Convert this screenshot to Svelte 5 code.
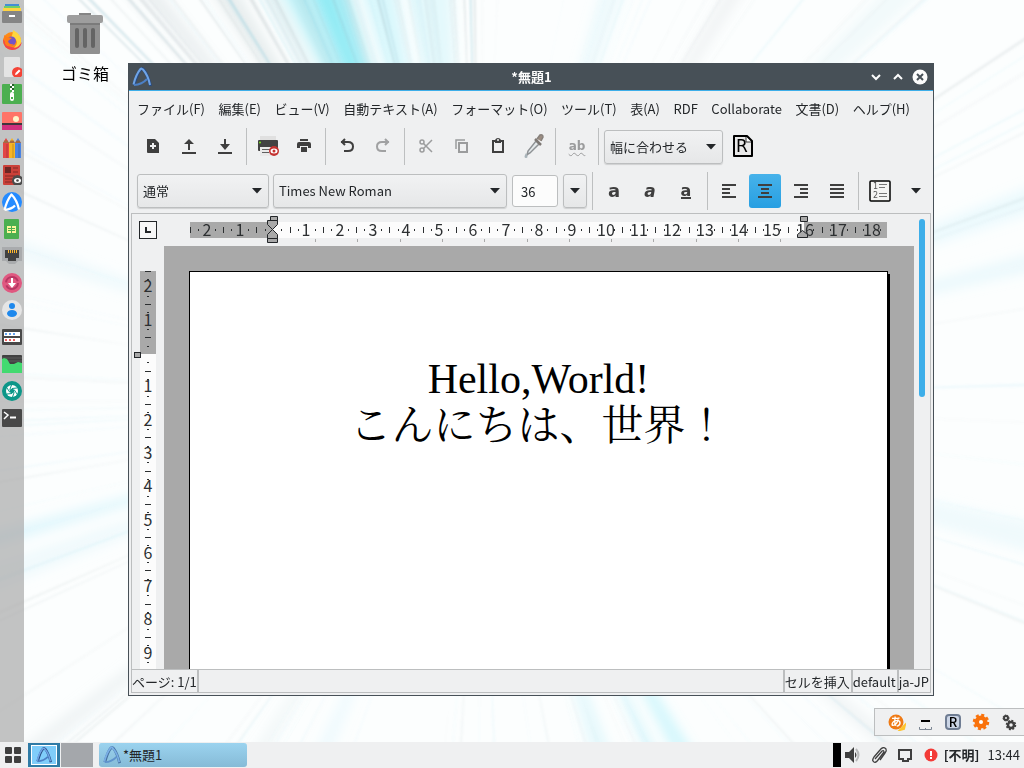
<script>
  const menus = ['ファイル(F)', '編集(E)', 'ビュー(V)', '自動テキスト(A)', 'フォーマット(O)', 'ツール(T)', '表(A)', 'RDF', 'Collaborate', '文書(D)', 'ヘルプ(H)'];
  const dock = ['files', 'firefox', 'note', 'archive', 'image', 'pencils', 'reader', 'abiword', 'sheet', 'network', 'updates', 'user', 'settings', 'monitor', 'shutter', 'terminal'];

  const marks = (from, to, cm) => {
    const list = [];
    for (let q = from; q <= to; q++) {
      const kind = q % 4 === 0 ? 'label' : q % 2 === 0 ? 'half' : 'dot';
      if (q !== 0) list.push({ at: Math.round((q * cm) / 4), kind, label: Math.abs(q / 4) });
    }
    return list;
  };
  const across = marks(-10, 73, 33.25);
  const down = marks(-10, 37, 33.3);
  const tabs = Array.from({ length: 12 }, (_, i) => 125 + Math.round(i * 42.3));

  let seed = 11;
  const rnd = () => (seed = (seed * 16807) % 2147483647) / 2147483647;
  const ray = (deg, spread, r0, r1) => {
    const cx = 480, cy = 400;
    const p = (a, r) => `${(cx + Math.cos((a * Math.PI) / 180) * r).toFixed(1)},${(cy + Math.sin((a * Math.PI) / 180) * r).toFixed(1)}`;
    return `${p(deg, r0)} ${p(deg - spread, r1)} ${p(deg + spread, r1)}`;
  };
  const fine = Array.from({ length: 190 }, (_, i) => {
    const top = i % 3 === 0;
    const a = top ? 225 + rnd() * 45 : rnd() * 360;
    return { d: ray(a, 0.04 + rnd() * 0.16, 120 + rnd() * 200, 900), c: rnd() > 0.55 ? '#8fd8ea' : '#8d9ca3', o: (top ? 0.14 : 0.03) + rnd() * 0.12 };
  });
  const broad = [
    [248, 5, '#8cecf7', 0.5], [249, 1.6, '#3fdcec', 0.4], [251.5, 0.5, '#14bccf', 0.4], [246, 0.4, '#58717a', 0.3], [242.5, 0.8, '#8fc6d2', 0.3],
    [256, 3, '#a6eefa', 0.4], [263, 4, '#c7f3fb', 0.45], [238, 1.6, '#b9c6cb', 0.3], [231, 1, '#99a9b0', 0.18],
    [288, 2, '#c8f1f9', 0.25], [302, 1, '#c2cacd', 0.2], [316, 1.5, '#cfe9f0', 0.2], [164, 1, '#a5e9f8', 0.3],
    [160, 1.6, '#d3f3fa', 0.3], [198, 1.4, '#d7f2f8', 0.3], [340, 1.4, '#bfeefa', 0.25], [346, 1, '#c6eef7', 0.3],
    [14, 1.6, '#d2f3fa', 0.3], [60, 1.6, '#7ce7f7', 0.3], [64, 0.8, '#8ce6f5', 0.35], [71, 1.8, '#bff1fa', 0.4],
    [114, 1.4, '#c7f1fa', 0.25], [122, 1, '#c9d7dc', 0.2], [142, 1, '#d5dde0', 0.3], [40, 1, '#d4dde0', 0.25]
  ].map(([a, s, c, o]) => ({ d: ray(a, s, 150, 900), c, o }));
</script>

{#snippet arrow()}
  <svg class="arrow" width="10" height="6" viewBox="0 0 10 6" aria-hidden="true"><path d="M0 0h10L5 5.5z" fill="#232629" /></svg>
{/snippet}

{#snippet abi(size)}
  <svg width={size} height={size} viewBox="0 0 20 20" aria-hidden="true">
    <path d="M2 18C4 11 6 5 9 2Q10 1 12 3C15 7 17 13 18.500 19" fill="none" stroke="#274b82" stroke-width="3" stroke-linejoin="round" />
    <path d="M1.500 17.500C3 11 6 5 8.500 2Q9.500 1 11 2.500C15 7 17 13 18 18" fill="none" stroke="#6fa4e6" stroke-width="2" />
    <path d="M2 18Q10 17.500 15 12" fill="none" stroke="#4c80c6" stroke-width="2" />
  </svg>
{/snippet}

{#snippet dockIcon(name)}
  <svg width="20" height="20" viewBox="0 0 20 20" aria-hidden="true">
    {#if name === 'files'}
      <rect x="3" y="1" width="14" height="4" fill="#438ed5" /><rect x="2" y="3" width="16" height="4" fill="#70ce68" /><rect x="1" y="5" width="18" height="4" fill="#ffd342" />
      <rect y="8" width="20" height="12" rx="1" fill="#858585" /><rect x="7" y="12" width="6" height="2" fill="#fff" />
    {:else if name === 'firefox'}
      <circle cx="10" cy="11" r="9" fill="#ff8a16" /><path d="M1 9Q1 19 10 20 18 20 20 12 13 21 6 15Z" fill="#f0444f" />
      <path d="M11 0Q20 5 19 12 18 17 12 18 19 10 9 8 11 4 11 0" fill="#ffd53d" /><circle cx="9.500" cy="11" r="4.500" fill="#7554c6" /><path d="M2 5l3 2 5 1-4 3q1 4 6 3-5 5-9 0Z" fill="#ff7d1a" />
    {:else if name === 'note'}
      <rect x="2" y="0" width="16" height="20" rx="1" fill="#e4e4e4" /><circle cx="15.500" cy="15.500" r="5.500" fill="#f44336" /><path d="M13 18l.5-2 3.500-3.500 1.500 1.500L15 17.500z" fill="#fff" />
    {:else if name === 'archive'}
      <rect width="20" height="20" rx="1" fill="#4caf50" /><path d="M8 0h2v2H8zM10 2h2v2h-2zM8 4h2v2H8zM10 6h2v2h-2z" fill="#fff" /><path d="M10 0h2v2h-2zM8 2h2v2H8zM10 4h2v2h-2z" fill="#25612a" /><rect x="8" y="8" width="4" height="9" rx="2" fill="#fff" /><rect x="9" y="13" width="2" height="2" fill="#4caf50" />
    {:else if name === 'image'}
      <rect y="1" width="20" height="18" rx="1" fill="#ff7367" /><circle cx="14" cy="8" r="3" fill="#fff3c9" /><rect y="13" width="20" height="6" fill="#d1307d" /><rect y="12" width="20" height="2" fill="#40353b" />
    {:else if name === 'pencils'}
      <path d="M1 5l3-5 3 5v15H1z" fill="#e34646" /><path d="M7 5l3-5 3 5v15H7z" fill="#f6b526" /><path d="M13 5l3-5 3 5v15h-6z" fill="#4a84e4" /><path d="M1 5l1.500-2.500h3L7 5zM7 5l1.500-2.500h3L13 5zM13 5l1.500-2.500h3L19 5z" fill="#a56a43" /><path d="M5 6v14M11 6v14M17 6v14" stroke="#0003" />
    {:else if name === 'reader'}
      <rect x="1" width="17" height="20" rx="1" fill="#cb4039" /><path d="M3 2h6v6H3z" fill="#6b2624" /><path d="M11 3h5M11 7h5M3 11h10M3 14h7M3 17h7" stroke="#7f2926" /><circle cx="15.500" cy="15.500" r="5.500" fill="#4b4b4b" /><ellipse cx="15.500" cy="15.500" rx="3.500" ry="2.500" fill="#fff" /><circle cx="15.500" cy="15.500" r="1.300" fill="#4b4b4b" />
    {:else if name === 'abiword'}
      <circle cx="10" cy="10" r="10" fill="#258bff" /><path d="M2.500 18Q5 8 9.500 2.500Q15 8 17 17.500M2.500 18Q10 17 13 13.500" fill="none" stroke="#fff" stroke-width="2.200" stroke-linejoin="round" />
    {:else if name === 'sheet'}
      <rect x="2" width="15" height="20" rx="1" fill="#4caf50" /><path d="M5 7h9v7H5z" fill="#fff59d" /><path d="M9.500 7v7M6 9.500h7M6 11.500h7" stroke="#4caf50" />
    {:else if name === 'network'}
      <path d="M0 1h20v14h-4l-3 3H7l-3-3H0z" fill="#a9abad" /><path d="M3 4h14v8h-3v3H6v-3H3z" fill="#424242" /><path d="M6 4h1v3H6zM8 4h1v3H8zM10 4h1v3h-1zM12 4h1v3h-1zM14 4h1v3h-1z" fill="#ffb72c" />
    {:else if name === 'updates'}
      <circle cx="10" cy="10" r="10" fill="#e05880" /><circle cx="10" cy="10" r="6" fill="none" stroke="#b73763" stroke-width="2" stroke-dasharray="16 3" /><path d="M9 5h2v5h3l-4 5-4-5h3z" fill="#fff" />
    {:else if name === 'user'}
      <circle cx="10" cy="10" r="10" fill="#e5e5e5" /><circle cx="10" cy="6" r="3" fill="#1e88ec" /><ellipse cx="10" cy="13.500" rx="5" ry="3.500" fill="#1e88ec" />
    {:else if name === 'settings'}
      <rect y="2" width="20" height="16" rx="1" fill="#484848" /><path d="M2 5h16v4H2zM2 11h16v4H2z" fill="#fff" /><path d="M3 6h2v2H3zM7 6h2v2H7zM11 6h2v2h-2z" fill="#64a2ed" /><path d="M3 12h2v2H3zM7 12h2v2H7zM11 12h2v2h-2z" fill="#ef6262" />
    {:else if name === 'monitor'}
      <rect y="1" width="20" height="18" rx="1" fill="#424242" /><path d="M0 4h20M0 7h20" stroke="#5b5b5b" /><path d="M0 5l2-1 3 1 3 5 4 0 4-2 4 1v10H0z" fill="#43da70" />
    {:else if name === 'shutter'}
      <circle cx="10" cy="10" r="10" fill="#0c9688" /><circle cx="10" cy="10" r="6" fill="#fff" />
      <path d="M10 7.500l2.200 1.200v2.600L10 12.500l-2.200-1.200V8.700z" fill="#0c9688" />
      <path d="M10 7.500L15 7M12.200 8.700L15 13M12.200 11.300L10.500 16M10 12.500L5 13M7.800 11.300L5 7M7.800 8.700L9.500 4" stroke="#0c9688" />
    {:else}
      <rect y="1" width="20" height="18" rx="1" fill="#484848" /><path d="M2 4l4 3-4 4" fill="none" stroke="#fff" stroke-width="1.500" /><path d="M8 9.500h6" stroke="#fff" stroke-width="2" />
    {/if}
  </svg>
{/snippet}

<div class="screen">
  <svg class="wallpaper" viewBox="0 0 1024 768" preserveAspectRatio="none" aria-hidden="true">
    <defs>
      <filter id="soft" x="-10%" y="-10%" width="120%" height="120%"><feGaussianBlur stdDeviation="6" /></filter>
      <filter id="thin" x="-10%" y="-10%" width="120%" height="120%"><feGaussianBlur stdDeviation="0.8" /></filter>
    </defs>
    <rect width="1024" height="768" fill="#fcfefe" />
    <g filter="url(#soft)">{#each broad as b}<polygon points={b.d} fill={b.c} opacity={b.o} />{/each}</g>
    <g filter="url(#thin)">{#each fine as f}<polygon points={f.d} fill={f.c} opacity={f.o} />{/each}</g>
  </svg>

  <div class="desktop">
    <nav class="dock" aria-label="ランチャー">
      {#each dock as name}
        <button aria-label={name}>{@render dockIcon(name)}</button>
      {/each}
    </nav>

    <button class="trash">
      <svg width="36" height="42" viewBox="0 0 36 42" aria-hidden="true">
        <rect x="12" y="0" width="12" height="3" fill="#858585" /><rect x="3" y="9" width="30" height="32" rx="1" fill="#909090" /><rect x="3" y="10" width="30" height="2" fill="#7b7b7b" />
        <rect y="2" width="36" height="8" rx="2" fill="#9e9e9e" /><g fill="#646464"><rect x="8" y="15" width="4" height="20" rx="2" /><rect x="16" y="15" width="4" height="20" rx="2" /><rect x="24" y="15" width="4" height="20" rx="2" /></g>
      </svg>
      <span>ゴミ箱</span>
    </button>

    <main class="window">
      <header class="titlebar">
        {@render abi(20)}
        <h1>*無題1</h1>
        <div class="controls">
          <button aria-label="最小化"><svg width="16" height="16" viewBox="0 0 16 16"><path d="M4 6l4 4 4-4" fill="none" stroke="#fcfcfc" stroke-width="2" /></svg></button>
          <button aria-label="最大化"><svg width="16" height="16" viewBox="0 0 16 16"><path d="M4 10l4-4 4 4" fill="none" stroke="#fcfcfc" stroke-width="2" /></svg></button>
          <button aria-label="閉じる"><svg width="16" height="16" viewBox="0 0 16 16"><circle cx="8" cy="8" r="7.500" fill="#fcfcfc" /><path d="M5 5l6 6M11 5l-6 6" stroke="#475057" stroke-width="2" /></svg></button>
        </div>
      </header>

      <nav class="menubar">
        {#each menus as m}<button>{m}</button>{/each}
      </nav>

      <div class="toolbar first">
        <button aria-label="新規"><svg width="22" height="22" viewBox="0 0 22 22"><path d="M5 4h8l4 4v10H6q-1 0-1-1z" fill="#3f3f3f" /><path d="M11 8v6M8 11h6" stroke="#eff0f1" stroke-width="2" /></svg></button>
        <button aria-label="開く"><svg width="22" height="22" viewBox="0 0 22 22" fill="#3f3f3f"><path d="M4 17h14v2H4zM11 4l5 5h-4v6h-2V9H6z" /></svg></button>
        <button aria-label="保存"><svg width="22" height="22" viewBox="0 0 22 22" fill="#3f3f3f"><path d="M4 17h14v2H4zM10 4h2v5h4l-5 6-5-6h4z" /></svg></button>
        <i class="sep"></i>
        <button aria-label="印刷プレビュー"><svg width="22" height="22" viewBox="0 0 22 22"><path d="M3 1h16v6H3z" fill="#e0e0e0" /><rect x="1" y="5" width="20" height="11" rx="1" fill="#424242" /><circle cx="3" cy="7.500" r="1" fill="#76e31b" /><path d="M3 12h15v9H3z" fill="#e9e9e9" /><path d="M5 14.500h9M5 17.500h7" stroke="#606060" /><circle cx="17" cy="16" r="5" fill="#c43331" /><ellipse cx="17" cy="16" rx="3.500" ry="2.500" fill="#fff" /><circle cx="17" cy="16" r="1.500" fill="#c43331" /></svg></button>
        <button aria-label="印刷"><svg width="22" height="22" viewBox="0 0 22 22" fill="#3f3f3f"><path d="M7 4h8v2H7zM6 7h10q2 0 2 2v4h-3v-2H7v2H4V9q0-2 2-2zM8 12h6v5H8z" /></svg></button>
        <i class="sep"></i>
        <button aria-label="元に戻す"><svg width="22" height="22" viewBox="0 0 22 22" fill="none" stroke="#3f3f3f" stroke-width="2"><path d="M9 4L6 7l3 3M5 7h7q5 0 5 4.500T12 16H8" /></svg></button>
        <button aria-label="やり直す"><svg width="22" height="22" viewBox="0 0 22 22" fill="none" stroke="#a0a1a2" stroke-width="2"><path d="M13 4l3 3-3 3M17 7h-7q-5 0-5 4.500T10 16h4" /></svg></button>
        <i class="sep"></i>
        <button aria-label="切り取り"><svg width="22" height="22" viewBox="0 0 22 22" fill="none" stroke="#9b9c9d" stroke-width="1.500"><circle cx="7" cy="7" r="2" /><circle cx="7" cy="15" r="2" /><path d="M8.500 8.500L17 17M8.500 13.500L17 5" /></svg></button>
        <button aria-label="コピー"><svg width="22" height="22" viewBox="0 0 22 22" fill="none" stroke="#9b9c9d"><path d="M5 14V5h9" stroke-width="1.500" /><path d="M8 8h8v9H8z" stroke-width="2" /></svg></button>
        <button aria-label="貼り付け"><svg width="22" height="22" viewBox="0 0 22 22"><path d="M6 6h10v11H6z" fill="none" stroke="#3f3f3f" stroke-width="2" /><path d="M8 5q1-2 3-2t3 2v3H8z" fill="#3f3f3f" /><circle cx="11" cy="5" r="1" fill="#eff0f1" /></svg></button>
        <button aria-label="書式の貼り付け"><svg width="22" height="26" viewBox="0 0 22 26"><path d="M13 8l3 3-9 9-2 1-1 1 1-4z" fill="#e3e8ea" stroke="#8e9295" stroke-width="1.500" /><path d="M14 6l3-4q3-1 3 2l-2 4" fill="#9b8d82" stroke="#87817c" stroke-width="1.500" /><path d="M12 6l6 6" stroke="#7d7874" stroke-width="2.500" /><path d="M3 20q-3 5 0 5t0-5" fill="#a8b3b9" /></svg></button>
        <i class="sep"></i>
        <button class="spell" aria-label="スペルチェック"><b>ab</b></button>
        <i class="sep"></i>
        <label class="combo zoom"><select aria-label="表示倍率"><option>幅に合わせる</option></select>{@render arrow()}</label>
        <button aria-label="RDF"><svg width="22" height="24" viewBox="0 0 22 24"><path d="M2 2h13l5 5v15H2z" fill="#e9e9e9" stroke="#000" stroke-width="2" stroke-linejoin="round" /><path d="M14 3v5h5" fill="#fff" stroke="#333" /><text class="rdf" x="4" y="18">R</text></svg></button>
      </div>

      <div class="toolbar second">
        <label class="combo style"><select aria-label="スタイル"><option>通常</option></select>{@render arrow()}</label>
        <label class="combo font"><select aria-label="フォント"><option>Times New Roman</option></select>{@render arrow()}</label>
        <input class="size" aria-label="文字サイズ" value="36" />
        <button class="drop" aria-label="サイズを選択">{@render arrow()}</button>
        <i class="sep"></i>
        <button class="letter" aria-label="太字"><b>a</b></button>
        <button class="letter italic" aria-label="斜体"><b>a</b></button>
        <button class="letter under" aria-label="下線"><b>a</b></button>
        <i class="sep"></i>
        <button aria-label="左揃え"><svg width="16" height="16" viewBox="0 0 16 16"><path d="M1 2h14M1 6h8M1 10h8M1 14h14" stroke="#3f3f3f" stroke-width="2" /></svg></button>
        <button class="active" aria-label="中央揃え"><svg width="16" height="16" viewBox="0 0 16 16"><path d="M1 2h14M4 6h8M4 10h8M1 14h14" stroke="#3f3f3f" stroke-width="2" /></svg></button>
        <button aria-label="右揃え"><svg width="16" height="16" viewBox="0 0 16 16"><path d="M1 2h14M7 6h8M7 10h8M1 14h14" stroke="#3f3f3f" stroke-width="2" /></svg></button>
        <button aria-label="両端揃え"><svg width="16" height="16" viewBox="0 0 16 16"><path d="M1 2h14M1 6h14M1 10h14M1 14h14" stroke="#3f3f3f" stroke-width="2" /></svg></button>
        <i class="sep"></i>
        <button aria-label="段組"><svg width="22" height="22" viewBox="0 0 22 22"><rect x="1" y="1" width="20" height="20" rx="1" fill="#f4f4f3" stroke="#000" stroke-width="1.500" /><text class="num" x="4" y="9">1</text><text class="num" x="4" y="18">2</text><path d="M10 4.500h8M10 7.500h6M10 13.500h8M10 16.500h8" stroke="#777" /></svg></button>
        <button aria-label="その他">{@render arrow()}</button>
      </div>

      <section class="frame">
        <button class="tabkind" aria-label="タブの種類"><svg width="18" height="18" viewBox="0 0 18 18"><rect x="0.500" y="0.500" width="17" height="17" fill="#f7f7f7" stroke="#232629" /><path d="M7 6v5h5" fill="none" stroke="#232629" stroke-width="2" /></svg></button>
        <svg class="hruler" height="32" width="750" viewBox="0 0 750 32" aria-label="水平ルーラー">
          <rect x="26" y="8" width="697" height="16" fill="#fcfcfc" /><rect x="26" y="8" width="83" height="16" fill="#a9a9a9" /><rect x="640" y="8" width="83" height="16" fill="#a9a9a9" />
          {#each across as m}
            {#if m.kind === 'label'}<text x={109 + m.at} y="22" text-anchor="middle">{m.label}</text>
            {:else if m.kind === 'half'}<rect x={109 + m.at} y="13" width="1" height="6" />
            {:else}<rect x={109 + m.at} y="15" width="1" height="2" />{/if}
          {/each}
          {#each tabs as t}<rect x={t + 26} y="25" width="1" height="3" fill="#a9a9a9" />{/each}
          <g fill="#a9a9a9" stroke="#232629">
            <path d="M106.500 2.500h7v4h-7zM103.500 6.500h10v4l-5 5-5-5zM108.500 15.500l5 5v4h-10v-4zM103.500 24.500h10v4h-10z" />
            <path d="M636.500 2.500h7v5h-7zM633.500 23.500v-3l5-4 5 4v3z" />
          </g>
        </svg>
        <svg class="vruler" width="32" height="423" viewBox="0 0 32 423" aria-label="垂直ルーラー">
          <rect x="8" y="25" width="16" height="398" fill="#fcfcfc" /><rect x="8" y="25" width="16" height="83" fill="#a9a9a9" />
          {#each down as m}
            {#if m.kind === 'label'}<text x="16" y={113 + m.at} text-anchor="middle">{m.label}</text>
            {:else if m.kind === 'half'}<rect x="13" y={108 + m.at} width="6" height="1" />
            {:else}<rect x="15" y={108 + m.at} width="2" height="1" />{/if}
          {/each}
          <rect x="2.500" y="106.500" width="6" height="5" fill="#a9a9a9" stroke="#232629" />
        </svg>
        <div class="canvas">
          <article class="page" lang="ja">
            <p>Hello,World!</p>
            <p>こんにちは、世界！</p>
          </article>
        </div>
        <div class="scroll"><span></span></div>
      </section>

      <footer class="status">
        <span>ページ: 1/1</span><span class="grow"></span><span>セルを挿入</span><span>default</span><span>ja-JP</span>
      </footer>
    </main>

    <div class="ime">
      <button aria-label="かな漢字変換"><svg width="18" height="18" viewBox="0 0 18 18"><circle cx="8" cy="9" r="7.500" fill="#ef7a15" /><path d="M12 17l5-5-1 4z" fill="#ffc42e" stroke="#ffc42e" stroke-width="2" /><text x="8" y="13" font-size="11" font-weight="700" text-anchor="middle" fill="#fff">あ</text></svg></button>
      <button aria-label="入力モード"><svg width="18" height="18" viewBox="0 0 18 18"><path d="M5 8h9" stroke="#000" stroke-width="2" /><path d="M3.500 14v2.500h12V14M9.500 16v-1" fill="none" stroke="#7d8794" /></svg></button>
      <button aria-label="ローマ字"><svg width="18" height="18" viewBox="0 0 18 18"><rect x="2" y="2" width="14" height="14" rx="3" fill="#cbd5e6" stroke="#6f7d93" stroke-width="2" /><text x="9" y="14" font-size="13" font-weight="500" text-anchor="middle" fill="#000">R</text></svg></button>
      <button aria-label="設定"><svg width="18" height="18" viewBox="0 0 18 18"><circle cx="9" cy="9" r="6.500" fill="#f9720c" /><circle cx="9" cy="9" r="7" fill="none" stroke="#f9720c" stroke-width="2.500" stroke-dasharray="3 2.500" /><circle cx="9" cy="9" r="2" fill="#fff" /></svg></button>
      <button aria-label="オプション"><svg width="18" height="18" viewBox="0 0 18 18" fill="none" stroke="#3f3f3f"><circle cx="6" cy="5" r="2" stroke-width="2" /><circle cx="6" cy="5" r="3" stroke-dasharray="1.500 1" /><circle cx="11" cy="12" r="3" stroke-width="2.500" /><circle cx="11" cy="12" r="4.500" stroke-width="1.500" stroke-dasharray="2 1.500" /></svg></button>
    </div>
  </div>

  <footer class="taskbar">
    <button class="start" aria-label="メニュー"><svg width="16" height="16" viewBox="0 0 16 16" fill="#3f3f3f"><rect width="7" height="7" rx="1" /><rect x="9" width="7" height="7" rx="1" /><rect y="9" width="7" height="7" rx="1" /><rect x="9" y="9" width="7" height="7" rx="1" /></svg></button>
    <button class="pager on" aria-label="デスクトップ 1"><span>{@render abi(16)}</span></button>
    <button class="pager" aria-label="デスクトップ 2"></button>
    <button class="task"><span class="faded">{@render abi(18)}</span>*無題1</button>
    <div class="tray">
      <i class="block"></i>
      <svg width="18" height="18" viewBox="0 0 18 18"><path d="M1 6h4l5-5v16l-5-5H1z" fill="#3f3f3f" /><path d="M11 6q3 3 0 6z" fill="#3f3f3f" /><path d="M12 3q5 6 0 12" fill="none" stroke="#b7b8b9" stroke-width="2" /></svg>
      <svg width="18" height="18" viewBox="0 0 18 18"><path d="M5 13L12 5q2-1 2 1L8 14q-3 4-5 1-1-1 1-4l6-7q3-4 6-1 1 2-1 4l-5 7" fill="none" stroke="#3f3f3f" stroke-width="1.300" /></svg>
      <svg width="18" height="18" viewBox="0 0 18 18"><path d="M3 4h12v9h-3v2H7v-2H3z" fill="none" stroke="#3f3f3f" stroke-width="2" /></svg>
      <svg width="18" height="18" viewBox="0 0 18 18"><circle cx="9" cy="9" r="6.500" fill="#f33b37" /><path d="M8 5h2v5H8zM8 11h2v2H8z" fill="#fff" /></svg>
      <b>[不明]</b>
      <time>13:44</time>
    </div>
  </footer>
</div>

<style>
  :global(body) { margin: 0; }
  .screen {
    position: relative; display: flex; flex-direction: column; height: 100vh; overflow: hidden;
    font: 13px/20px "Noto Sans CJK JP", sans-serif; color: #232629;
  }
  .wallpaper { position: absolute; inset: 0; width: 100%; height: 100%; }
  button { display: flex; align-items: center; justify-content: center; padding: 0; border: 0; background: none; color: inherit; font: inherit; }
  svg { display: block; flex: none; }
  h1, p { margin: 0; }

  .desktop { position: relative; flex: 1; display: flex; min-height: 0; }
  .dock { width: 24px; background: rgba(170, 170, 170, 0.7); }
  .dock button { padding: 3px 2px 4px; }
  .trash { position: absolute; left: 58px; top: 13px; width: 54px; flex-direction: column; gap: 8px; font-size: 16px; color: #000; }

  .window {
    position: absolute; inset: 63px 90px 46px 128px; display: flex; flex-direction: column;
    box-sizing: border-box; border: 1px solid #475057; border-top: 0; background: #eff0f1;
  }
  .titlebar { display: grid; grid-template-columns: 66px 1fr 66px; align-items: center; height: 27px; padding: 0 2px 0 3px; background: #475057; border-bottom: 1px solid #3daee9; }
  h1 { font-size: 13px; font-weight: 700; text-align: center; color: #fcfcfc; }
  .controls { display: flex; }
  .controls button { width: 22px; height: 22px; }

  .menubar { display: flex; justify-content: space-between; box-sizing: border-box; height: 37px; padding: 0 23px 2px 8px; }
  .menubar button { white-space: nowrap; }

  .toolbar { display: flex; align-items: center; }
  .toolbar > * { flex: none; }
  .first { height: 37px; padding: 0 6px; }
  .second { height: 38px; margin-top: 7px; padding: 0 8px; }
  .toolbar > button { width: 32px; height: 34px; margin: 0 2px; border-radius: 3px; }
  .toolbar.first > button { height: 36px; padding-bottom: 2px; }
  .sep { align-self: stretch; width: 1px; margin: 0 3px; background: #bdbfc0; }
  .active { background: linear-gradient(#47b2ea, #279fe2); }
  .combo { display: grid; align-items: center; }
  .combo select, .combo .arrow { grid-area: 1 / 1; }
  .combo .arrow { justify-self: end; margin-right: 7px; pointer-events: none; }
  select, .toolbar > .drop {
    appearance: none; box-sizing: border-box; height: 34px; width: 100%; padding: 0 5px;
    border: 1px solid #bcbebf; border-radius: 3px; background: linear-gradient(#f1f2f3, #e6e7e8);
    box-shadow: 0 1px 1px #0002; font: inherit; color: inherit;
  }
  .zoom { width: 119px; margin: 0 2px; }
  .style { width: 132px; margin-right: 4px; }
  .font { width: 234px; margin-right: 5px; }
  .size { box-sizing: border-box; width: 46px; height: 32px; padding: 0 8px; border: 1px solid #bcbebf; border-radius: 3px; background: #fcfcfc; font: inherit; color: inherit; }
  .toolbar > .drop { width: 24px; margin: 0 2px 0 5px; }
  .letter, .spell { color: #3f3f3f; font: 700 18px/18px "DejaVu Sans", sans-serif; }
  .italic { font-size: 17px; font-style: italic; }
  .under { font-size: 16px; }
  .under b { border-bottom: 2px solid; line-height: 13px; }
  .spell { color: #9b9c9d; font-size: 12px; }
  .spell b { text-decoration: underline wavy 1px; text-underline-offset: 2px; }
  .rdf { font: 17px "DejaVu Sans", sans-serif; fill: #000; }
  .num { font: 8px "DejaVu Sans", sans-serif; fill: #555; }

  .frame {
    flex: 1; min-height: 0; display: grid; grid-template: 32px 1fr / 32px 1fr 16px; overflow: hidden;
    margin: 3px 2px 0; border: 1px solid #bcbebf;
  }
  .tabkind { align-self: center; justify-self: center; }
  .hruler, .vruler { font-size: 16px; fill: #2c2f31; }
  .hruler { grid-area: 1 / 2; }
  .vruler { grid-area: 2 / 1; }
  .canvas { grid-area: 2 / 2; overflow: hidden; padding: 25px 26px 0 25px; background: #a9a9a9; }
  .page {
    box-sizing: border-box; height: 110%; padding: 84px 0 0; border: 1px solid #000; background: #fff; box-shadow: 2px 3px #000;
    font: 42px/47px "Liberation Serif", "Noto Serif CJK JP", "Noto Sans CJK JP", serif; text-align: center; color: #000;
  }
  .scroll { grid-area: 1 / 3 / 3 / 4; padding: 5px; }
  .scroll span { display: block; width: 6px; height: 40%; border-radius: 3px; background: #3daee9; }

  .status { display: flex; height: 22px; margin: 0 2px 2px; border-bottom: 1px solid #bcbebf; line-height: 24px; white-space: nowrap; }
  .status span { border-right: 1px solid #bcbebf; border-left: 1px solid #bcbebf; }
  .status .grow { flex: 1; }
  .grow ~ span { padding-right: 1px; }

  .ime { position: absolute; right: 0; bottom: 6px; display: flex; height: 26px; padding: 0 1px 0 8px; border: 1px solid #bcbebf; border-right: 0; background: #eff0f1; }
  .ime button { width: 28px; }

  .taskbar { position: relative; display: flex; align-items: center; height: 26px; background: #eff0f1; }
  .start { width: 26px; margin-right: 2px; }
  .pager { width: 32px; height: 24px; margin-right: 1px; background: #a4a7ab; }
  .pager.on { background: #2f7ba6; }
  .pager span { display: flex; justify-content: center; width: 24px; padding: 1px 0; border: 1px solid #fff; background: #80cdfa; }
  .task { width: 148px; height: 24px; margin-left: 5px; padding: 0 4px; gap: 2px; justify-content: flex-start; border-radius: 3px; background: linear-gradient(#9bd3ef, #86bbd7); }
  .faded { opacity: 0.7; }
  .tray { display: flex; align-items: center; gap: 8px; margin-left: auto; padding-right: 4px; white-space: nowrap; }
  .block { width: 8px; height: 24px; margin-right: -5px; background: #000; }
  .tray b { margin-left: -4px; }
</style>
